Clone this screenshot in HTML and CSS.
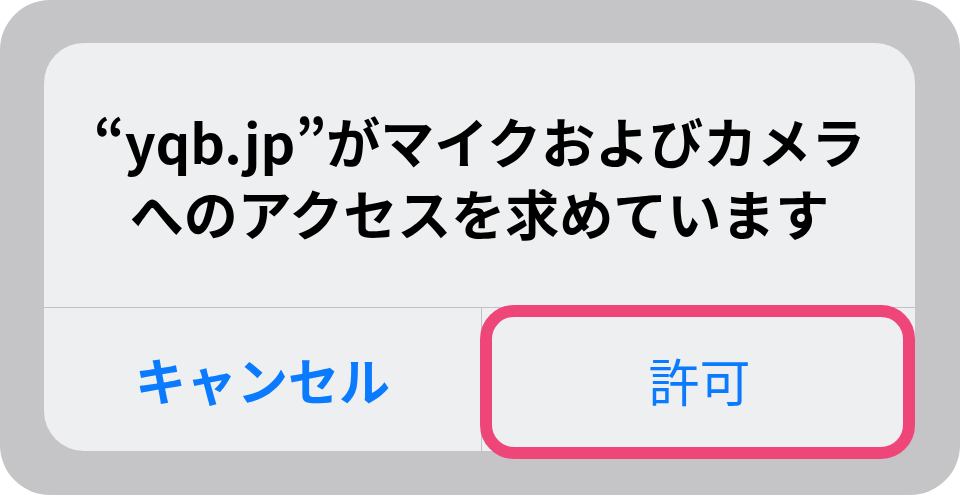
FILE: index.html
```html
<!DOCTYPE html>
<html lang="ja">
<head>
<meta charset="utf-8">
<link rel="stylesheet" href="styles.css">
</head>
<body>
<div class="frame">
  <div class="dialog">
    <div class="message">
      <p class="title">“yqb.jp”がマイクおよびカメラ<br>へのアクセスを求めています</p>
    </div>
    <div class="actions">
      <div class="btn cancel">キャンセル</div>
      <div class="btn allow">許可<span class="highlight"></span></div>
    </div>
  </div>
</div>
</body>
</html>
```

FILE: styles.css
```css
html, body {
  margin: 0;
  padding: 0;
  background: #ffffff;
}
.frame {
  width: 960px;
  height: 495px;
  box-sizing: border-box;
  background: #c5c5c7;
  border-radius: 50px;
  padding: 43px 45px 44px 44px;
}
.dialog {
  height: 100%;
  background: #eeeff0;
  border-radius: 40px;
  display: flex;
  flex-direction: column;
}
.message {
  height: 265px;
  box-sizing: border-box;
  border-bottom: 1px solid #c2c2c4;
  display: flex;
  align-items: center;
  justify-content: center;
}
.title {
  margin: 0;
  padding-top: 4px;
  font-family: "Noto Sans CJK JP", "Noto Sans", sans-serif;
  font-weight: 700;
  font-size: 54px;
  line-height: 72px;
  color: #000;
  text-align: center;
}
.actions {
  flex: 1;
  display: grid;
  grid-template-columns: 437px 1fr;
}
.btn {
  position: relative;
  display: flex;
  align-items: center;
  justify-content: center;
  font-family: "Noto Sans CJK JP", sans-serif;
  font-size: 51px;
  color: #0a7aff;
}
.cancel {
  font-weight: 700;
  padding-bottom: 2px;
}
.allow {
  font-weight: 400;
  border-left: 1px solid #c2c2c4;
  padding-left: 2px;
}
.highlight {
  position: absolute;
  top: -3px;
  left: -2px;
  right: 0;
  bottom: -8px;
  border: 12px solid #ee4678;
  border-radius: 34px;
}
```
